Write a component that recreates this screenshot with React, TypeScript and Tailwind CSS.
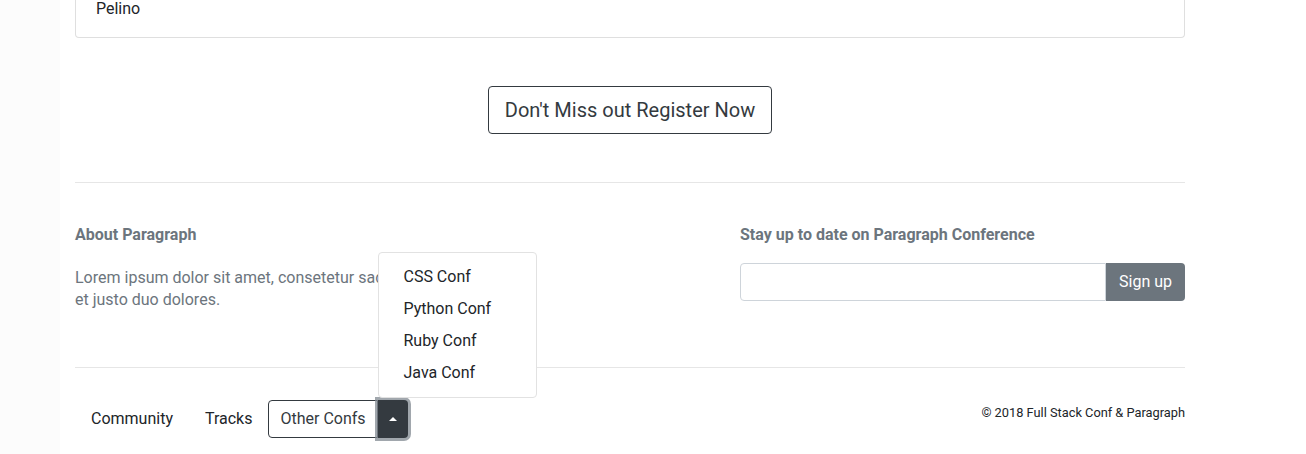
const confs = ["CSS Conf", "Python Conf", "Ruby Conf", "Java Conf"];

export default function App() {
  return (
    <div
      className="flex min-h-[454px] bg-white text-[#212529]"
      style={{ fontFamily: "Roboto, 'Liberation Sans', sans-serif" }}
    >
      <div className="w-[60px] shrink-0 bg-[#fcfcfc]" />
      <div className="w-[1140px] shrink-0 px-[15px]">
        {/* speaker card tail */}
        <div className="rounded-b border border-t-0 border-[#dfdfdf] px-5 pb-4">
          <p className="-mt-[3px] text-base leading-6">Pelino</p>
        </div>

        <div className="flex justify-center pt-[48px] pb-[48px]">
          <button className="rounded border border-[#343a40] px-4 py-2 text-xl leading-[30px] text-[#343a40]">
            Don't Miss out Register Now
          </button>
        </div>

        <hr className="border-t border-[#e6e6e6]" />

        <div className="flex pt-[40px] pb-[56px]">
          <div className="w-[665px] shrink-0">
            <h5 className="text-base font-bold leading-6 text-[#6c757d]">About Paragraph</h5>
            <p className="mt-[20px] w-[470px] text-base leading-[22px] text-[#6c757d]">
              Lorem ipsum dolor sit amet, consetetur sadipscing elitr,
              <br />
              et justo duo dolores.
            </p>
          </div>
          <div className="flex-1">
            <h5 className="text-base font-bold leading-6 text-[#6c757d]">
              Stay up to date on Paragraph Conference
            </h5>
            <div className="mt-[16px] flex">
              <input
                type="text"
                className="h-[38px] flex-1 rounded-l border border-[#ced4da] bg-white px-3 outline-none"
              />
              <button className="h-[38px] w-[79px] rounded-r bg-[#6c757d] text-base text-white">
                Sign up
              </button>
            </div>
          </div>
        </div>

        <hr className="border-t border-[#e6e6e6]" />

        <div className="flex items-center justify-between pt-[32px]">
          <div className="flex items-center">
            <a className="px-4 text-base leading-6">Community</a>
            <a className="px-4 text-base leading-6">Tracks</a>
            <div className="relative flex">
              <button className="h-[38px] rounded-l border border-[#343a40] px-[11px] text-base text-[#343a40]">
                Other Confs
              </button>
              <button className="flex h-[38px] w-[30px] items-center justify-center rounded-r bg-[#343a40] shadow-[0_0_0_3px_rgba(130,138,145,0.75)]">
                <span className="block h-0 w-0 border-x-[4px] border-b-[4px] border-x-transparent border-b-white" />
              </button>
              <div className="absolute bottom-[40px] left-[110px] z-10 w-[159px] rounded border border-[#e2e2e2] bg-white py-2">
                {confs.map((c) => (
                  <div key={c} className="px-6 py-1 text-base leading-6 text-[#212529]">
                    {c}
                  </div>
                ))}
              </div>
            </div>
          </div>
          <p className="-mt-[13px] text-[12.8px] leading-5 text-[#212529]">
            © 2018 Full Stack Conf &amp; Paragraph
          </p>
        </div>
      </div>
    </div>
  );
}
